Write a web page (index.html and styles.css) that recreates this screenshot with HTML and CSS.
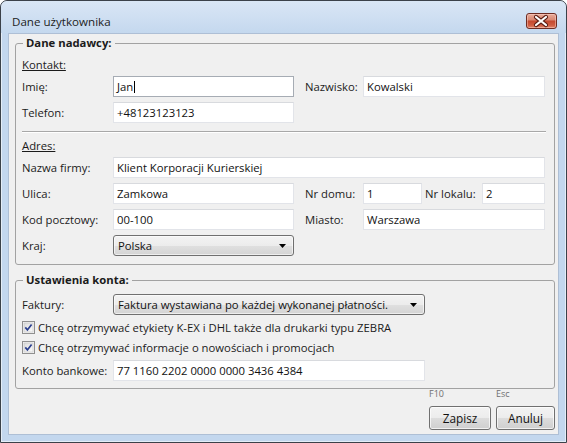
FILE: index.html
```html
<!DOCTYPE html>
<html lang="pl">
<head>
<meta charset="utf-8">
<title>Dane użytkownika</title>
<link rel="stylesheet" href="styles.css">
</head>
<body>
<div class="window">
  <div class="titlebar">
    <span class="title">Dane użytkownika</span>
    <span class="close">
      <svg width="29" height="14" viewBox="0 0 29 14">
        <path d="M9 3 L19 11 M19 3 L9 11" stroke="#5b1e14" stroke-width="4.2" stroke-linecap="round"/>
        <path d="M9 3 L19 11 M19 3 L9 11" stroke="#ffffff" stroke-width="2.2" stroke-linecap="round"/>
      </svg>
    </span>
  </div>
  <div class="client">
    <fieldset class="group group-sender">
      <legend>Dane nadawcy:</legend>
      <div class="section">Kontakt:</div>
      <div class="grid">
        <span class="lbl c1">Imię:</span>
        <div class="tb focused c2">Jan<span class="caret"></span></div>
        <span class="lbl c4">Nazwisko:</span>
        <div class="tb c5-9">Kowalski</div>
        <span class="lbl c1">Telefon:</span>
        <div class="tb c2">+48123123123</div>
      </div>
      <div class="sep"></div>
      <div class="section">Adres:</div>
      <div class="grid">
        <span class="lbl c1">Nazwa firmy:</span>
        <div class="tb c2-9">Klient Korporacji Kurierskiej</div>
        <span class="lbl c1">Ulica:</span>
        <div class="tb c2">Zamkowa</div>
        <span class="lbl c4">Nr domu:</span>
        <div class="tb c5">1</div>
        <span class="lbl c7">Nr lokalu:</span>
        <div class="tb c8">2</div>
        <span class="lbl c1">Kod pocztowy:</span>
        <div class="tb c2">00-100</div>
        <span class="lbl c4">Miasto:</span>
        <div class="tb c5-9">Warszawa</div>
        <span class="lbl c1">Kraj:</span>
        <div class="combo c2"><span>Polska</span><svg class="arrow" width="7" height="4" viewBox="0 0 7 4"><path d="M0 0 H7 L3.5 4 Z" fill="#000"/></svg></div>
      </div>
    </fieldset>
    <fieldset class="group group-account">
      <legend>Ustawienia konta:</legend>
      <div class="row">
        <span class="lbl lblw">Faktury:</span>
        <div class="combo wide"><span>Faktura wystawiana po każdej wykonanej płatności.</span><svg class="arrow" width="7" height="4" viewBox="0 0 7 4"><path d="M0 0 H7 L3.5 4 Z" fill="#000"/></svg></div>
      </div>
      <div class="check first">
        <svg class="cb" width="13" height="13" viewBox="0 0 13 13">
          <defs><linearGradient id="cbg" x1="0" y1="0" x2="1" y2="1"><stop offset="0" stop-color="#dcdcdc"/><stop offset="1" stop-color="#fbfbfb"/></linearGradient></defs>
          <rect x="0.5" y="0.5" width="12" height="12" fill="#f4f4f4" stroke="#8f8f8f"/>
          <rect x="2" y="2" width="9" height="9" fill="url(#cbg)" stroke="#c4c4c4" stroke-width="0.6"/>
          <path d="M3.3 6.4 L5.4 8.9 L9.6 3.4" fill="none" stroke="#2b3f8e" stroke-width="1.7"/>
        </svg>
        <span>Chcę otrzymywać etykiety K-EX i DHL także dla drukarki typu ZEBRA</span>
      </div>
      <div class="check">
        <svg class="cb" width="13" height="13" viewBox="0 0 13 13">
          <rect x="0.5" y="0.5" width="12" height="12" fill="#f4f4f4" stroke="#8f8f8f"/>
          <rect x="2" y="2" width="9" height="9" fill="url(#cbg)" stroke="#c4c4c4" stroke-width="0.6"/>
          <path d="M3.3 6.4 L5.4 8.9 L9.6 3.4" fill="none" stroke="#2b3f8e" stroke-width="1.7"/>
        </svg>
        <span>Chcę otrzymywać informacje o nowościach i promocjach</span>
      </div>
      <div class="row last">
        <span class="lbl lblw">Konto bankowe:</span>
        <div class="tb wide">77 1160 2202 0000 0000 3436 4384</div>
      </div>
    </fieldset>
    <div class="footer">
      <div class="action">
        <span class="hint">F10</span>
        <div class="btn save">Zapisz</div>
      </div>
      <div class="action">
        <span class="hint">Esc</span>
        <div class="btn cancel">Anuluj</div>
      </div>
    </div>
  </div>
</div>
</body>
</html>
```

FILE: styles.css
```css
* { box-sizing: border-box; }
html, body { margin: 0; padding: 0; }
body {
  width: 567px;
  height: 443px;
  overflow: hidden;
  background: #ffffff;
  font-family: "Open Sans", "Noto Sans", sans-serif;
  font-size: 11.3px;
  color: #1b1b1b;
}
.window {
  width: 567px;
  height: 443px;
  border: 1px solid #3b4149;
  border-radius: 7px 7px 0 0;
  background: #c3d7ee;
  display: flex;
  flex-direction: column;
  padding: 0 7px 7px;
  box-shadow: inset 0 0 0 1px rgba(255,255,255,0.55);
  overflow: hidden;
}
.titlebar {
  height: 32px;
  margin: 0 -7px;
  padding: 0 9px 0 11px;
  display: flex;
  align-items: flex-start;
  justify-content: space-between;
  background: linear-gradient(to bottom, #d9e6f5 0%, #cfdff2 50%, #c4d8ee 100%);
  border-radius: 6px 6px 0 0;
}
.title {
  margin-top: 13px;
  line-height: 16px;
  font-size: 11.6px;
  color: #1e1e1e;
}
.close {
  margin-top: 12px;
  width: 31px;
  height: 16px;
  border: 1px solid #6e2c22;
  border-radius: 3px;
  background: linear-gradient(to bottom, #e9ab9a 0%, #d98a75 40%, #c54a30 52%, #cf5d42 80%, #e1876c 100%);
  box-shadow: inset 0 0 0 1px rgba(255,220,210,0.45);
  display: flex;
}
.close svg { display: block; }
.client {
  flex: 1;
  background: #f0f0f0;
  border: 1px solid #aebfd5;
  padding: 1px 3px 4px 6px;
  display: flex;
  flex-direction: column;
}
.group {
  margin: 0;
  padding: 6px 8px 8px 6px;
  border: 1px solid #a2a2a2;
  border-radius: 3px;
  min-width: 0;
}
.group legend {
  padding: 0 3px;
  margin-left: 1px;
  font-weight: bold;
  line-height: 16px;
  color: #1b1b1b;
}
.group-account { margin-top: 7px; padding-bottom: 7px; }
.section {
  height: 16px;
  line-height: 16px;
  text-decoration: underline;
  margin-bottom: 3px;
}
.grid {
  display: grid;
  grid-template-columns: 91px 181px 11px 58px 59px 3px 57px 63px;
  grid-auto-rows: 21px;
  row-gap: 5px;
}
.c1 { grid-column: 1; }
.c2 { grid-column: 2; }
.c4 { grid-column: 4; }
.c5 { grid-column: 5; }
.c7 { grid-column: 7; }
.c8 { grid-column: 8; }
.c5-9 { grid-column: 5 / 9; }
.c2-9 { grid-column: 2 / 9; }
.lbl {
  display: flex;
  align-items: center;
  white-space: nowrap;
}
.tb {
  height: 21px;
  background: #ffffff;
  border: 1px solid #e2e4e9;
  border-top-color: #d8dade;
  padding: 0 3px;
  display: flex;
  align-items: center;
  white-space: nowrap;
  color: #111;
}
.tb.focused { border-color: #a6acb4; }
.caret {
  display: inline-block;
  width: 1px;
  height: 12px;
  background: #000;
  margin-left: 1px;
}
.sep {
  margin-top: 8px;
  margin-bottom: 5px;
  border-top: 1px solid #a8a8a8;
  border-bottom: 1px solid #ffffff;
}
.combo {
  height: 21px;
  border: 1px solid #707070;
  border-radius: 3px;
  background: linear-gradient(to bottom, #f3f3f3 0%, #ececec 50%, #e0e0e0 50%, #d4d4d4 100%);
  box-shadow: inset 0 0 0 1px rgba(255,255,255,0.6);
  padding: 0 7px 0 4px;
  display: flex;
  align-items: center;
  justify-content: space-between;
  white-space: nowrap;
  color: #111;
}
.arrow { display: block; flex: none; }
.row {
  display: flex;
  height: 21px;
}
.lblw { width: 91px; }
.wide { width: 312px; }
.check {
  display: flex;
  align-items: center;
  height: 16px;
  margin-top: 4px;
  gap: 3px;
  white-space: nowrap;
}
.cb { display: block; flex: none; }
.row.last { margin-top: 5px; }
.footer {
  margin-top: auto;
  display: flex;
  justify-content: flex-end;
  gap: 5px;
}
.action {
  display: flex;
  flex-direction: column;
}
.hint {
  font-size: 9px;
  line-height: 10px;
  color: #6f6f6f;
  margin-bottom: 7px;
}
.btn {
  height: 24px;
  border: 1px solid #707070;
  border-radius: 3px;
  background: linear-gradient(to bottom, #f3f3f3 0%, #ececec 50%, #dddddd 50%, #cfcfcf 100%);
  box-shadow: inset 0 0 0 1px rgba(255,255,255,0.7);
  display: flex;
  align-items: center;
  justify-content: center;
  font-size: 11.8px;
  color: #111;
}
.save { width: 62px; }
.cancel { width: 59px; }
```
